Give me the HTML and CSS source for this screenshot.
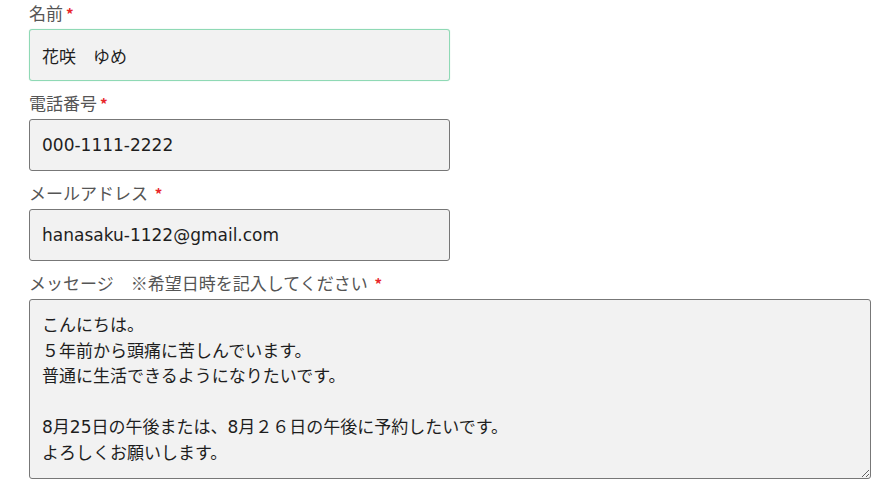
FILE: index.html
```html
<!DOCTYPE html>
<html lang="ja">
<head>
<meta charset="utf-8">
<title>お問い合わせ</title>
<link rel="stylesheet" href="styles.css">
</head>
<body>
<form class="contact-form">
  <div class="field">
    <label class="field-label" for="name">名前<span class="req">*</span></label>
    <input class="text-input is-focused" id="name" type="text" value="花咲　ゆめ">
  </div>
  <div class="field">
    <label class="field-label" for="tel">電話番号<span class="req">*</span></label>
    <input class="text-input" id="tel" type="text" value="000-1111-2222">
  </div>
  <div class="field">
    <label class="field-label" for="mail">メールアドレス <span class="req">*</span></label>
    <input class="text-input" id="mail" type="text" value="hanasaku-1122@gmail.com">
  </div>
  <div class="field">
    <label class="field-label" for="msg">メッセージ　※希望日時を記入してください <span class="req">*</span></label>
    <textarea class="text-area" id="msg">こんにちは。
５年前から頭痛に苦しんでいます。
普通に生活できるようになりたいです。

8月25日の午後または、8月２６日の午後に予約したいです。
よろしくお願いします。</textarea>
  </div>
</form>
</body>
</html>
```

FILE: styles.css
```css
* {
  box-sizing: border-box;
}

html, body {
  margin: 0;
  padding: 0;
  background: #ffffff;
}

body {
  font-family: "Noto Sans CJK JP", "Liberation Sans", sans-serif;
}

.contact-form {
  display: flex;
  flex-direction: column;
  gap: 9px;
  padding: 0 19px 0 29px;
}

.field {
  display: flex;
  flex-direction: column;
  gap: 3px;
}

.field-label {
  display: block;
  height: 26px;
  font-size: 17px;
  line-height: 26px;
  color: #555555;
  white-space: nowrap;
}

.req {
  color: #e8262a;
  font-weight: 700;
  font-size: 15px;
  margin-left: 3px;
}

.text-input,
.text-area {
  font-family: "DejaVu Sans", "Noto Sans CJK JP", sans-serif;
  font-size: 17px;
  color: #1e1e1e;
  background: #f2f2f2;
  border: 1px solid #777777;
  border-radius: 3px;
  outline: none;
  margin: 0;
}

.text-input {
  width: 421px;
  height: 52px;
  padding: 0 12px;
  line-height: 50px;
}

.text-input.is-focused {
  border-color: #8fd9b5;
  box-shadow: 0 0 1px rgba(110, 205, 160, 0.6);
}

.text-area {
  width: 842px;
  height: 180px;
  padding: 13px 12px;
  line-height: 25.5px;
  resize: both;
  overflow: hidden;
}
```
